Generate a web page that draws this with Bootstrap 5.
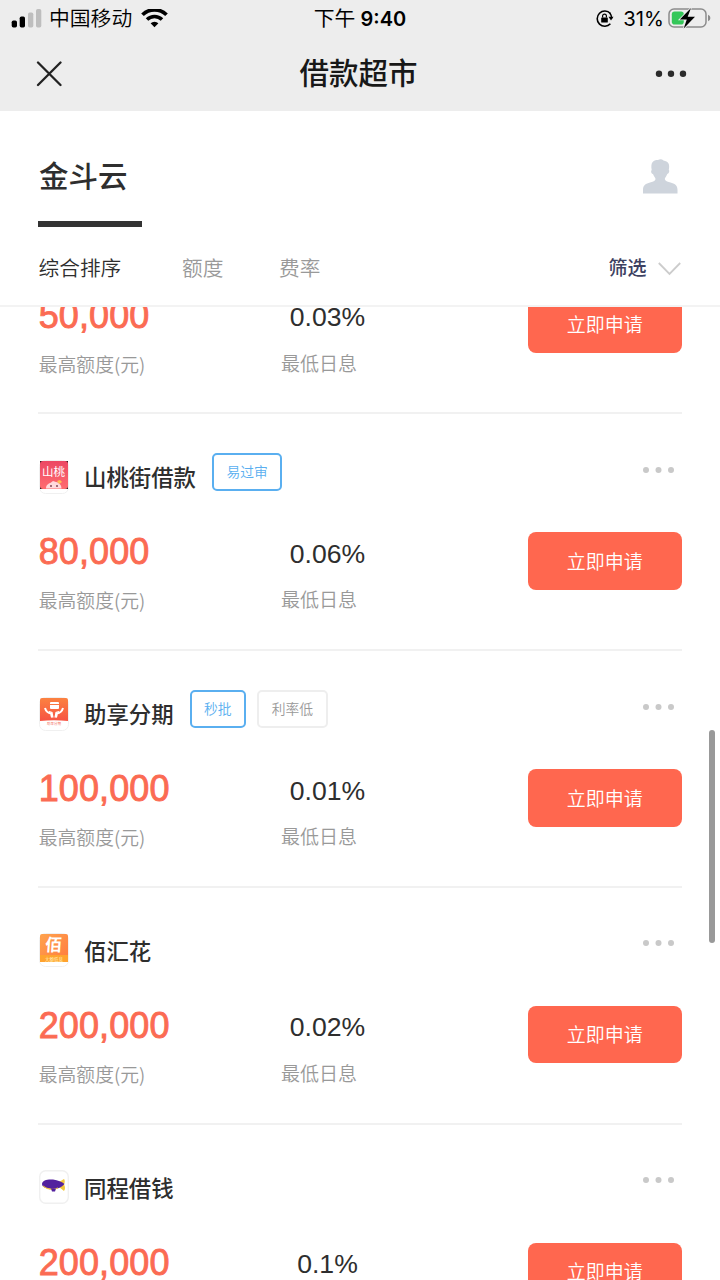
<!DOCTYPE html>
<html lang="zh-CN">
<head>
<meta charset="utf-8">
<meta name="viewport" content="width=device-width, initial-scale=1">
<title>借款超市</title>
<link href="https://cdn.jsdelivr.net/npm/bootstrap@5.3.0/dist/css/bootstrap.min.css" rel="stylesheet">
<style>
  body { font-family: "Liberation Sans", "Noto Sans CJK SC", sans-serif; color: #2e2e2e; background: #fff; height: 1280px; overflow: hidden; }
  svg { display: block; flex: none; }
  .top-area { background: #ededed; height: 111px; color: #000; }
  .status-bar { height: 37px; font-size: 20.8px; line-height: 37px; padding: 0 9px 0 11px; }
  .status-side { width: 240px; }
  .carrier { margin: 0 9px 0 7px; font-weight: 350; }
  .clock { font-family: Inter, "Noto Sans CJK SC", sans-serif; font-weight: 600; font-size: 20px; position: relative; left: -1px; }
  .clock span { font-weight: 400; font-size: 20.8px; }
  .pct { font-family: Inter, sans-serif; font-size: 20.3px; }
  .title-bar { height: 72px; padding: 1px 33px 0 36px; }
  .title-bar h1 { font-size: 29.5px; font-weight: 500; color: #181818; line-height: 72px; padding-top: 1px; }
  .brand-row { height: 110px; padding: 0 42px 0 38px; }
  .brand-name { font-size: 29.5px; font-weight: 500; line-height: 42px; margin-top: 45px; padding-left: 1px; }
  .brand-line { width: 104px; height: 6px; background: #333; margin-top: 23px; }
  .user-icon { margin-top: 48px; }
  .sort-bar { height: 86px; padding: 12px 39px 0 38.5px; font-size: 20.7px; font-weight: 350; color: #999; border-bottom: 2px solid #f3f3f3; }
  .sort-first { width: 143.5px; color: #2e2e2e; }
  .sort-second { width: 97px; }
  .filter-label { font-size: 19px; font-weight: 500; color: #3d4161; margin-right: 11.5px; padding-top: 1px; }
  .loan-list { height: 973px; }
  .loan-list > :first-child { margin-top: -129.5px; }
  .loan { height: 236.8px; margin: 0 38.5px 0 38px; border-bottom: 2px solid #f1f1f1; flex: none; }
  .loan-head { height: 118px; padding-top: 38.5px; }
  .logo { margin-top: 7px; margin-left: .5px; margin-right: 15.5px; }
  .loan-name { font-size: 22.4px; font-weight: 500; line-height: 32px; margin-top: 10.5px; margin-right: 16px; }
  .tag { height: 38.5px; border: 2px solid #eee; border-radius: 5px; color: #999; font-size: 13.8px; font-weight: 350; line-height: 34px; padding: 1px 12.5px 0; margin-right: 11px; }
  .tag-hot { border-color: #5aaff0; color: #5aaff0; }
  .more { margin: 13px 7.500px 0 auto; }
  .amount { width: 214px; }
  .amount b { display: block; font-weight: 400; -webkit-text-stroke: .9px #fb6b53; color: #fb6b53; font-size: 36px; letter-spacing: .1px; line-height: 40px; padding-left: .7px; }
  .amount small, .rate small { display: block; font-family: "Noto Sans CJK SC", sans-serif; font-size: 19px; font-weight: 350; line-height: 28px; color: #999; }
  .amount small { margin-top: 14px; padding-left: .8px; font-size: 18.800px; }
  .rate { width: 151px; }
  .rate b { display: block; font-weight: 400; font-size: 26.6px; line-height: 40px; padding-top: 1.500px; }
  .rate small { margin-top: 11.500px; padding-right: 17px; }
  .btn-apply, .btn-apply:hover { width: 153.5px; height: 57.5px; background: #ff674f; color: #fff; border: 0; border-radius: 8px; font-size: 19px; font-weight: 350; }
  .scroll-thumb { position: absolute; left: 709px; top: 730px; width: 6px; height: 213px; border-radius: 3px; background: #999; }
</style>
</head>
<body>
<header class="top-area">
  <div class="status-bar d-flex justify-content-between">
    <div class="status-side d-flex align-items-center">
      <svg width="31" height="20" viewBox="0 0 31 20"><rect x=".7" y="11.500" width="5.300" height="7" rx="1.700"/><rect x="8.700" y="7.500" width="5.300" height="11" rx="1.700"/><g fill="#bebebe"><rect x="17" y="3.500" width="5.300" height="15" rx="1.700"/><rect x="25" y="0" width="5.300" height="18.500" rx="1.700"/></g></svg>
      <span class="carrier">中国移动</span>
      <svg width="27" height="20" viewBox="0 0 27 20" fill="none" stroke="#000"><path d="M1.500 5.800a17 17 0 0 1 24 0" stroke-width="3.700"/><path d="M6 10.500a10.600 10.600 0 0 1 15 0" stroke-width="3.500"/><path d="M9.600 14.300a5.500 5.500 0 0 1 7.800 0L13.500 18.200z" fill="#000" stroke="none"/></svg>
    </div>
    <div class="clock"><span>下午</span> 9:40</div>
    <div class="status-side d-flex align-items-center justify-content-end">
      <svg width="20" height="20" viewBox="0 0 20 20"><path d="M15.400 4.500A7.600 7.600 0 1 0 15.400 14.800" fill="none" stroke="#000" stroke-width="1.600"/><path d="M14.800 4A8 8 0 0 1 16.600 9.500" fill="none" stroke="#000" stroke-width="1.500"/><path d="M13.500 7.800h5l-2.500 3.800z"/><rect x="6.200" y="8.500" width="6.600" height="5" rx=".6"/><path d="M7.600 8.500V7a1.900 1.900 0 0 1 3.800 0v1.500" fill="none" stroke="#000" stroke-width="1.200"/></svg>
      <span class="pct mx-1 ps-1">31%</span>
      <svg width="43" height="22" viewBox="0 0 43 22"><rect x="1" y="1" width="37" height="18" rx="5" fill="none" stroke="#8c8c8c" stroke-width="1.500"/><path d="M40 6.800q2.400 1 2.400 3.200T40 13.200z" fill="#8c8c8c"/><rect x="3.800" y="3.500" width="12" height="13" rx="2.800" fill="#34c759"/><path d="M23 0 11.800 11.500h7L15.700 20.500 27 8.700h-7.300z" stroke="#ededed" stroke-width="1.600" paint-order="stroke"/></svg>
    </div>
  </div>
  <div class="title-bar d-flex align-items-center justify-content-between">
    <svg width="26" height="26" viewBox="0 0 26 26" stroke="#222" stroke-width="2.300" stroke-linecap="round"><path d="M2 1.500 24.500 24M24.500 1.500 2 24"/></svg>
    <h1 class="mb-0">借款超市</h1>
    <svg width="32" height="8" viewBox="0 0 32 8" fill="#2b2b2b"><circle cx="4" cy="3.800" r="3.200"/><circle cx="16" cy="3.800" r="3.200"/><circle cx="28" cy="3.800" r="3.200"/></svg>
  </div>
</header>

<section class="brand-row d-flex justify-content-between">
  <div><div class="brand-name">金斗云</div><div class="brand-line"></div></div>
  <svg class="user-icon" width="36" height="36" viewBox="0 0 36 36" fill="#ced4dc"><path d="M1 34.500V31c0-5 3-6.500 7-7.500 4-1 5.500-1.800 5.500-3.500 0-1.200-1.600-2.600-2.400-4.800-2-.5-2.600-3.200-1.400-4.200C8.400 3.500 11 1 16 1c2-1 4-.8 5.500 .5 4.700 .8 6.600 3.500 5.300 9.200 1 1 .4 3.700-1.500 4.200-.8 2.200-2.500 3.900-2.500 5.100 0 1.700 1.700 2.500 5.700 3.500 4 1 7 2.500 7 7.500v3.500z"/></svg>
</section>

<nav class="sort-bar d-flex align-items-center">
  <span class="sort-first">综合排序</span>
  <span class="sort-second">额度</span>
  <span>费率</span>
  <span class="filter-label ms-auto">筛选</span>
  <svg width="23" height="14" viewBox="0 0 23 14" fill="none" stroke="#ccc" stroke-width="1.800"><path d="m.8 1 10.700 11 10.700-11"/></svg>
</nav>

<svg width="0" height="0" class="position-absolute"><defs>
  <symbol id="dots" viewBox="0 0 32 8"><g fill="#c9c9c9"><circle cx="4" cy="4" r="3"/><circle cx="16.500" cy="4" r="3"/><circle cx="29" cy="4" r="3"/></g></symbol>
  <linearGradient id="pink" x2="0" y2="1"><stop stop-color="#ec4764"/><stop offset="1" stop-color="#ff6c70"/></linearGradient>
  <linearGradient id="orange" x2="0" y2="1"><stop stop-color="#fb8241"/><stop offset="1" stop-color="#f75343"/></linearGradient>
  <linearGradient id="amber" x2="1" y2="1"><stop stop-color="#ffa34e"/><stop offset="1" stop-color="#ff7a3e"/></linearGradient>
</defs></svg>

<main class="loan-list d-flex flex-column overflow-hidden">
  <article class="loan">
    <div class="loan-head"></div>
    <div class="d-flex">
      <div class="amount"><b>50,000</b><small>最高额度(元)</small></div>
      <div class="rate text-center"><b>0.03%</b><small>最低日息</small></div>
      <button class="btn btn-apply ms-auto p-0 pt-1">立即申请</button>
    </div>
  </article>

  <article class="loan">
    <div class="loan-head d-flex align-items-start">
      <svg class="logo" width="30" height="34" viewBox="0 0 30 34"><rect x=".5" y=".5" width="29" height="33" rx="6" fill="#fff" stroke="#f0f0f0"/><path fill="#222" d="M1 1h28v28H1z"/><rect x="1" y="1" width="28" height="28" rx="3" fill="url(#pink)"/><text x="3" y="16" font-size="11.500" fill="#fff" textLength="23">山桃</text><path d="M7 28.500c0-4 3-5 5-6l2-1.500 3 1c3 .5 5.500 3 5.500 6.500z" fill="#ffd9dc"/><path d="M18 21l3-1 2 2-3 2z" fill="#ffc154"/><circle cx="12" cy="26" r="1" fill="#804a58"/><circle cx="18" cy="26" r="1" fill="#804a58"/></svg>
      <span class="loan-name">山桃街借款</span><span class="tag tag-hot">易过审</span>
      <svg class="more" width="32" height="8"><use href="#dots"/></svg>
    </div>
    <div class="d-flex">
      <div class="amount"><b>80,000</b><small>最高额度(元)</small></div>
      <div class="rate text-center"><b>0.06%</b><small>最低日息</small></div>
      <button class="btn btn-apply ms-auto p-0 pt-1">立即申请</button>
    </div>
  </article>

  <article class="loan">
    <div class="loan-head d-flex align-items-start">
      <svg class="logo" width="30" height="34" viewBox="0 0 30 34"><rect x=".5" y=".5" width="29" height="33" rx="6" fill="#fff" stroke="#f0f0f0"/><path d="M1 3q0-2 2-2h24q2 0 2 2v21q-14-1.500-28 0z" fill="url(#orange)"/><rect x="11" y="5" width="9" height="7" rx="1" fill="#fff"/><path d="M11 7.500h9" stroke="#f97845"/><path d="M6 11q1.500 5 6 5.500l1 4M24 11q-1.500 5-6 5.500l-1 4" fill="none" stroke="#fff" stroke-width="2"/><path d="M10 14.500l3 1 1 5M20 14.500l-3 1-1 5" fill="none" stroke="#fff" stroke-width="1.200"/><text x="8" y="28" font-size="3.500" fill="#f3705a">助享分期</text></svg>
      <span class="loan-name">助享分期</span><span class="tag tag-hot">秒批</span><span class="tag">利率低</span>
      <svg class="more" width="32" height="8"><use href="#dots"/></svg>
    </div>
    <div class="d-flex">
      <div class="amount"><b>100,000</b><small>最高额度(元)</small></div>
      <div class="rate text-center"><b>0.01%</b><small>最低日息</small></div>
      <button class="btn btn-apply ms-auto p-0 pt-1">立即申请</button>
    </div>
  </article>

  <article class="loan">
    <div class="loan-head d-flex align-items-start">
      <svg class="logo" width="30" height="34" viewBox="0 0 30 34"><rect x=".5" y=".5" width="29" height="33" rx="6" fill="#fff" stroke="#f0f0f0"/><path d="M1 3q0-2 2-2h24q2 0 2 2v26H1z" fill="url(#amber)"/><path d="M1 22h28v7H1z" fill="#ffa32f"/><text x="6" y="18.500" font-size="17" font-weight="700" fill="#fff" transform="skewX(-4) translate(1)">佰</text><text x="6" y="27.500" font-size="4.500" fill="#fff0bd" textLength="18">大额低息</text></svg>
      <span class="loan-name">佰汇花</span>
      <svg class="more" width="32" height="8"><use href="#dots"/></svg>
    </div>
    <div class="d-flex">
      <div class="amount"><b>200,000</b><small>最高额度(元)</small></div>
      <div class="rate text-center"><b>0.02%</b><small>最低日息</small></div>
      <button class="btn btn-apply ms-auto p-0 pt-1">立即申请</button>
    </div>
  </article>

  <article class="loan">
    <div class="loan-head d-flex align-items-start">
      <svg class="logo" width="30" height="34" viewBox="0 0 30 34"><rect x=".7" y=".7" width="28.600" height="32.600" rx="6" fill="#fff" stroke="#f0f0f0" stroke-width="1.400"/><path d="M20 12 25 9q1.500 2 0 5.500Q27 18 25 21l-5-4z" fill="#f2c63b"/><path d="M3 14c0-4 6-5 11-4.500S23 12 25.500 14C22 18 18 19.500 13 19S3 17.500 3 14z" fill="#53219e"/><path d="M4 16q7 5 15 2-8 4-15-2z" fill="#f2c63b" stroke="#f2c63b" stroke-width=".6"/><path d="M12 18.500h5l-1 3h-3z" fill="#53219e"/></svg>
      <span class="loan-name">同程借钱</span>
      <svg class="more" width="32" height="8"><use href="#dots"/></svg>
    </div>
    <div class="d-flex">
      <div class="amount"><b>200,000</b><small>最高额度(元)</small></div>
      <div class="rate text-center"><b>0.1%</b><small>最低日息</small></div>
      <button class="btn btn-apply ms-auto p-0 pt-1">立即申请</button>
    </div>
  </article>
</main>
<div class="scroll-thumb"></div>
<script src="https://cdn.jsdelivr.net/npm/bootstrap@5.3.0/dist/js/bootstrap.bundle.min.js"></script>
</body>
</html>
